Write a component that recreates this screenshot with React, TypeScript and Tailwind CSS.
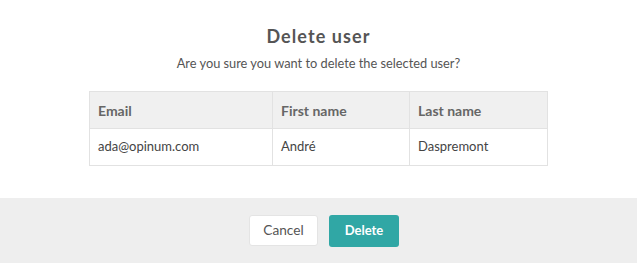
export default function App() {
  return (
    <div className="w-[637px] h-[263px] bg-white flex flex-col" style={{ fontFamily: "Lato, 'Open Sans', sans-serif" }}>
      <div className="h-[198px] flex flex-col items-center">
        <h1 className="mt-[24px] text-[18px] leading-[24px] font-bold tracking-[0.06em] text-[#555]">Delete user</h1>
        <p className="mt-[6px] text-[12.8px] leading-[18px] text-[#555]">Are you sure you want to delete the selected user?</p>
        <table className="mt-[19px] w-[459px] border-collapse text-[13px] text-[#444]">
          <thead>
            <tr className="bg-[#f0f0f0] h-[37px]">
              <th className="w-[183px] border border-[#e2e2e2] px-[8px] text-left text-[14px] font-bold text-[#666]">Email</th>
              <th className="w-[137px] border border-[#e2e2e2] px-[8px] text-left text-[14px] font-bold text-[#666]">First name</th>
              <th className="border border-[#e2e2e2] px-[8px] text-left text-[14px] font-bold text-[#666]">Last name</th>
            </tr>
          </thead>
          <tbody>
            <tr className="h-[37px]">
              <td className="border border-[#e2e2e2] px-[8px]">ada@opinum.com</td>
              <td className="border border-[#e2e2e2] px-[8px]">André</td>
              <td className="border border-[#e2e2e2] px-[8px]">Daspremont</td>
            </tr>
          </tbody>
        </table>
      </div>
      <div className="flex-1 bg-[#eeeeee] flex items-center justify-center gap-[11px] pl-[11px]">
        <button className="w-[69px] h-[31px] bg-white border border-[#e4e4e4] rounded-[3px] text-[13.7px] text-[#555]">Cancel</button>
        <button className="w-[70px] h-[32px] bg-[#30a7a5] rounded-[3px] text-[13px] font-bold text-white">Delete</button>
      </div>
    </div>
  );
}
